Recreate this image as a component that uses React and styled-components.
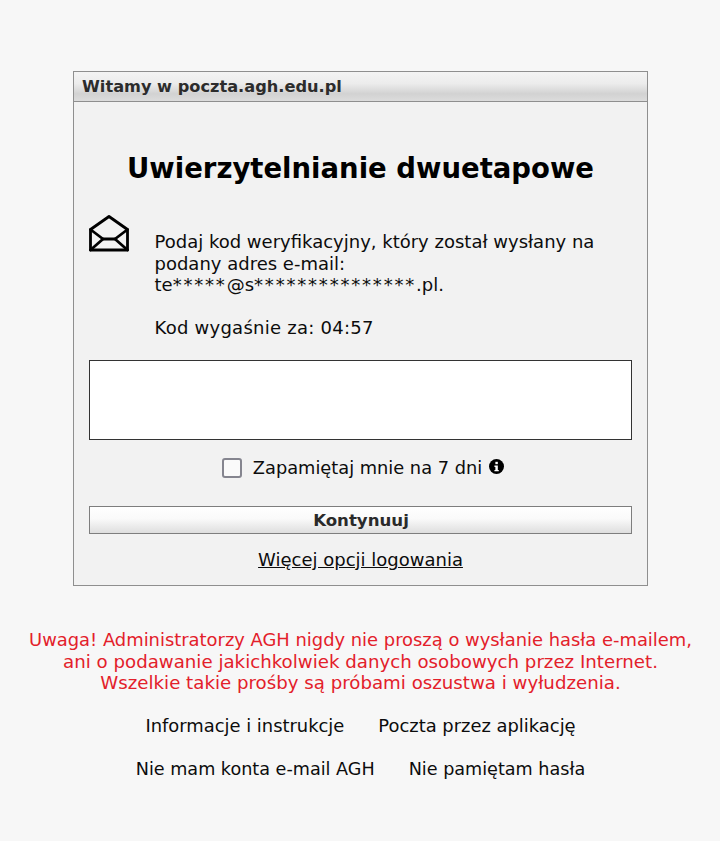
import React from "react";
import styled, { createGlobalStyle } from "styled-components";

const Global = createGlobalStyle`
  html, body { margin: 0; padding: 0; background: #f7f7f7; }
  body { font-family: "DejaVu Sans", Verdana, sans-serif; color: #0c0c0c; }
`;
const Page = styled.div`
  width: 720px; height: 841px; box-sizing: border-box; padding: 71px 0 0 1px;
  display: flex; flex-direction: column; align-items: center; overflow: hidden;
`;
const Card = styled.section`
  width: 575px; height: 515px; box-sizing: border-box; border: 1px solid #8f8f8f;
  background: #f2f2f2; display: flex; flex-direction: column;
`;
const CardHeader = styled.header`
  height: 30px; box-sizing: border-box; padding: 0 0 0 8px; border-bottom: 1px solid #8f8f8f;
  background: linear-gradient(#f4f4f4 0%, #ececec 40%, #d2d2d2 75%, #dcdcdc 100%);
  font-size: 16.2px; font-weight: 700; line-height: 29px; color: #2c2c2c;
`;
const CardBody = styled.div`
  flex: 1; padding: 0 15px; display: flex; flex-direction: column;
`;
const Title = styled.h1`
  margin: 49px 0 0; font-size: 27.5px; line-height: 34px; font-weight: 700; text-align: center; color: #000;
`;
const MessageRow = styled.div`
  display: flex; margin-top: 30px; height: 145px;
`;
const EnvelopeBox = styled.div`
  width: 65.5px; flex: none; margin-left: -0.5px; padding-right: 0.5px;
`;
const Message = styled.div`
  font-size: 18px; line-height: 21.5px; padding-top: 16px;
`;
const Masked = styled.span`
  letter-spacing: 1.8px;
`;
const Countdown = styled.p`
  margin: 21px 0 0; letter-spacing: 0.25px;
`;
const CodeInput = styled.input`
  display: block; width: 100%; height: 80px; box-sizing: border-box; border: 1px solid #333;
  background: #fff; outline: none;
`;
const RememberRow = styled.label`
  display: flex; align-items: center; justify-content: center; height: 29px; margin-top: 13px;
  font-size: 17.8px; padding-left: 5px;
`;
const CheckBox = styled.input`
  appearance: none; width: 20px; height: 20px; box-sizing: border-box; margin: 0 11px 0 0;
  border: 2px solid #85858f; border-radius: 3px; background: #fafafa;
`;
const InfoIcon = styled.svg`
  width: 15px; height: 15px; margin-left: 7px; margin-top: -3px;
`;
const SubmitButton = styled.button`
  display: block; width: 100%; height: 28px; box-sizing: border-box; margin-top: 24px; padding: 0 0 0 1px;
  border: 1px solid #7e7e7e; background: linear-gradient(#ffffff 0%, #fafafa 45%, #dedede 100%);
  font-family: inherit; font-size: 16.6px; font-weight: 700; color: #2a2a2a;
`;
const MoreLink = styled.a`
  display: block; margin-top: 14px; text-align: center; font-size: 18px; line-height: 24px;
  color: #0c0c0c; text-decoration: underline;
`;
const Warning = styled.div`
  margin: 43px 0 0; width: 700px; text-align: center; line-height: 21.5px; color: #e3202a;
`;
const WarningLine = styled.p`
  margin: 0; font-size: ${p => p.$size}px;
`;
const LinkRow = styled.nav`
  display: flex; justify-content: center; gap: 34px; font-size: ${p => p.$size}px; line-height: 24px;
  margin-top: ${p => p.$top}px;
`;
const FootLink = styled.a`
  color: #0c0c0c; text-decoration: none;
`;

export default function App() {
  return (
    <Page>
      <Global />
      <Card>
        <CardHeader>Witamy w poczta.agh.edu.pl</CardHeader>
        <CardBody>
          <Title>Uwierzytelnianie dwuetapowe</Title>
          <MessageRow>
            <EnvelopeBox>
              <svg width="40" height="37" viewBox="0 0 40 37" fill="none" stroke="#000" strokeWidth="2.8" strokeLinejoin="round" strokeLinecap="round">
                <path d="M1.5 14.5 L20 1.5 L38.5 14.5 V35 H1.5 Z" />
                <path d="M1.5 14.5 L14 24 H26 L38.5 14.5" />
                <path d="M1.5 35 L14 24 M38.5 35 L26 24" />
              </svg>
            </EnvelopeBox>
            <Message>
              Podaj kod weryfikacyjny, który został wysłany na<br />
              podany adres e-mail:<br />
              te<Masked>*****</Masked>@s<Masked>***************</Masked>.pl.
              <Countdown>Kod wygaśnie za: 04:57</Countdown>
            </Message>
          </MessageRow>
          <CodeInput type="text" aria-label="Kod" />
          <RememberRow>
            <CheckBox type="checkbox" />
            Zapamiętaj mnie na 7 dni
            <InfoIcon viewBox="0 0 16 16">
              <circle cx="8" cy="8" r="8" fill="#000" />
              <rect x="6.8" y="3" width="2.6" height="2.5" fill="#fff" />
              <path d="M5.8 7h3.6v4.6h1v1.5H5.8v-1.5h1V8.5h-1z" fill="#fff" />
            </InfoIcon>
          </RememberRow>
          <SubmitButton type="button">Kontynuuj</SubmitButton>
          <MoreLink href="#">Więcej opcji logowania</MoreLink>
        </CardBody>
      </Card>
      <Warning>
        <WarningLine $size={17.9}>Uwaga! Administratorzy AGH nigdy nie proszą o wysłanie hasła e-mailem,</WarningLine>
        <WarningLine $size={18.2}>ani o podawanie jakichkolwiek danych osobowych przez Internet.</WarningLine>
        <WarningLine $size={18.2}>Wszelkie takie prośby są próbami oszustwa i wyłudzenia.</WarningLine>
      </Warning>
      <LinkRow $top={20} $size={17.9}>
        <FootLink href="#">Informacje i instrukcje</FootLink>
        <FootLink href="#">Poczta przez aplikację</FootLink>
      </LinkRow>
      <LinkRow $top={19} $size={17.6}>
        <FootLink href="#">Nie mam konta e-mail AGH</FootLink>
        <FootLink href="#">Nie pamiętam hasła</FootLink>
      </LinkRow>
    </Page>
  );
}
